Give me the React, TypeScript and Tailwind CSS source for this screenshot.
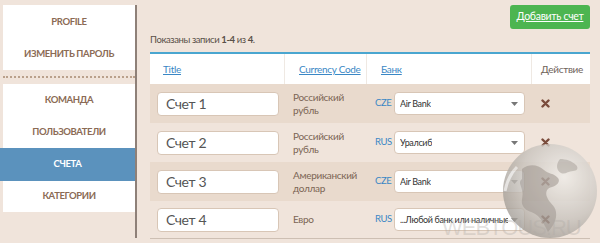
import React from "react";

const rows = [
  { name: "Счет 1", cur: ["Российский", "рубль"], code: "CZE", bank: "Air Bank", tan: true },
  { name: "Счет 2", cur: ["Российский", "рубль"], code: "RUS", bank: "Уралсиб", tan: false },
  { name: "Счет 3", cur: ["Американский", "доллар"], code: "CZE", bank: "Air Bank", tan: true },
  { name: "Счет 4", cur: ["Евро"], code: "RUS", bank: "...Любой банк или наличные", tan: false },
];

function Caret() {
  return (
    <svg width="7" height="4" viewBox="0 0 7 4" className="shrink-0">
      <path d="M0 0h7L3.5 4z" fill="#777" />
    </svg>
  );
}

function Cross() {
  return (
    <svg width="9" height="9" viewBox="0 0 9 9">
      <path d="M1.5 1.5l6 6M7.5 1.5l-6 6" stroke="#7a4b3b" strokeWidth="2.4" strokeLinecap="round" />
    </svg>
  );
}

function Globe() {
  return (
    <svg width="100" height="104" viewBox="0 0 100 104" className="absolute left-[500px] top-[139px] pointer-events-none opacity-80">
      <defs>
        <radialGradient id="g" cx="0.65" cy="0.35" r="0.75">
          <stop offset="0" stopColor="#f2f0ed" />
          <stop offset="0.6" stopColor="#c9c4be" />
          <stop offset="1" stopColor="#9d9790" />
        </radialGradient>
      </defs>
      <circle cx="50" cy="52" r="47" fill="url(#g)" />
      <path d="M22 30c8-6 16-4 22 1 4 4 10 3 14 8 3 4-2 8-6 9-5 1-7 5-5 10 2 6 8 8 9 15 1 8-3 14-8 20-3-6-6-12-10-16-5-5-12-4-15-10-3-5 1-10-1-16-1-5-4-8 0-11z" fill="#8a847e" opacity="0.55" />
      <path d="M60 20c6 0 12 2 16 6 3 3 1 6-3 6-5 0-8 4-12 2-4-2-6-8-1-14z" fill="#8a847e" opacity="0.45" />
      <path d="M5 52c2-10 6-18 12-24" stroke="#fff" strokeWidth="3" fill="none" opacity="0.6" />
    </svg>
  );
}

export default function App() {
  return (
    <div
      className="relative w-[600px] h-[243px] overflow-hidden bg-[#f0e4db] flex tracking-[-0.3px]"
      style={{ fontFamily: 'Lato, "Open Sans", sans-serif' }}
    >
      {/* Sidebar */}
      <div className="w-[137px] shrink-0 pt-[5px] pb-[5px] flex">
        <div className="flex-1 flex flex-col">
          <div className="ml-[3px] bg-white h-[65px] flex flex-col items-center justify-center gap-[19px] text-[9.5px] font-bold tracking-[-0.4px] text-[#8b6b55]">
            <div className="leading-[13px]">PROFILE</div>
            <div className="leading-[13px]">ИЗМЕНИТЬ ПАРОЛЬ</div>
          </div>
          <div className="ml-[3px] mt-[6px] border-t-2 border-dotted border-[#b9a08b] h-0" />
          <div className="ml-[3px] mt-[6px] bg-white h-[128px] flex flex-col text-[9.5px] font-bold tracking-[-0.4px] text-[#8b6b55]">
            <div className="h-[32px] flex items-center justify-center">КОМАНДА</div>
            <div className="h-[32px] flex items-center justify-center">ПОЛЬЗОВАТЕЛИ</div>
            <div className="h-[33px] -ml-[3px] flex items-center justify-center bg-[#5b92bd] text-white">СЧЕТА</div>
            <div className="h-[31px] flex items-center justify-center">КАТЕГОРИИ</div>
          </div>
        </div>
        <div className="w-[2px] bg-[#8e8078]" />
      </div>

      {/* Main */}
      <div className="ml-[13px] w-[440px] flex flex-col">
        <div className="h-[29px] flex justify-end pt-[5px]">
          <div className="h-[24px] w-[80px] rounded-[3px] bg-[#4db550] flex items-center justify-center text-white text-[10.5px] underline whitespace-nowrap">
            Добавить счет
          </div>
        </div>
        <div className="h-[23px] text-[9.5px] tracking-[-0.4px] text-[#5a5048] flex items-center">
          <span>
            Показаны записи <b>1-4</b> из <b>4</b>.
          </span>
        </div>
        <div className="border-t-2 border-[#4aa6d0] flex flex-col">
          <div className="h-[30px] bg-white flex text-[10px] whitespace-nowrap">
            <div className="w-[135px] border-r border-[#efe9e3] flex items-center pl-[13px]">
              <span className="text-[#3a87c5] underline">Title</span>
            </div>
            <div className="w-[82px] border-r border-[#efe9e3] flex items-center pl-[14px]">
              <span className="text-[#3a87c5] underline">Currency Code</span>
            </div>
            <div className="w-[165px] border-r border-[#efe9e3] flex items-center pl-[14px]">
              <span className="text-[#3a87c5] underline">Банк</span>
            </div>
            <div className="flex-1 flex items-center justify-end pr-[7px] text-[#6e625a]">Действие</div>
          </div>
          {rows.map((r, i) => (
            <div
              key={i}
              className={`flex items-center ${i === 3 ? "h-[38px] border-b border-[#cdbfb3]" : "h-[39px]"} ${r.tan ? "bg-[#e9dacd]" : ""}`}
            >
              <div className="w-[135px] pl-[7px]">
                <div className="w-[122px] h-[24px] rounded-[4px] border border-[#d8c6b6] bg-white flex items-center pl-[8px] text-[14px] tracking-[-0.3px] text-[#555]">
                  {r.name}
                </div>
              </div>
              <div className="w-[82px] pl-[8px] text-[10px] leading-[13px] text-[#7b6554]">
                {r.cur.map((c, j) => (
                  <div key={j}>{c}</div>
                ))}
              </div>
              <div className="w-[165px] pl-[8px] flex items-center gap-[2px]">
                <span className="text-[9.5px] tracking-[-0.4px] text-[#3a87c5] w-[17px] whitespace-nowrap">{r.code}</span>
                <div className="w-[131px] h-[23px] rounded-[4px] border border-[#d8c6b6] bg-white flex items-center justify-between gap-[3px] pl-[5px] pr-[6px] text-[9px] tracking-[-0.35px] text-[#333]">
                  <span className="whitespace-nowrap overflow-hidden">{r.bank}</span>
                  <Caret />
                </div>
              </div>
              <div className="flex-1 pl-[9px] flex items-center">
                <Cross />
              </div>
            </div>
          ))}
        </div>
      </div>

      <Globe />
      <div
        className="absolute left-[442px] top-[217px] text-[22px] leading-[22px] tracking-[-1px] text-[rgba(175,170,165,0.35)] pointer-events-none whitespace-nowrap"
        style={{ fontFamily: '"Liberation Sans", sans-serif' }}
      >
        WEBTOUS.RU
      </div>
    </div>
  );
}
